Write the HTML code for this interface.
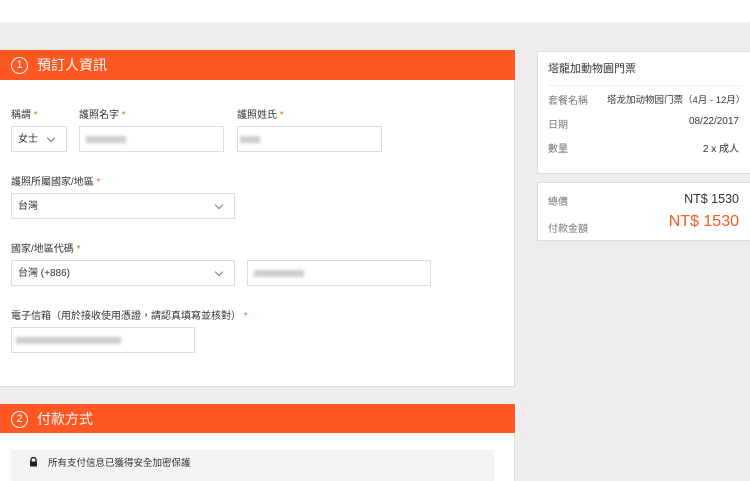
<!DOCTYPE html><html><head><meta charset="utf-8"><style>
*{box-sizing:border-box;margin:0;padding:0}
body{width:750px;height:481px;background:#ededed;font-family:"Liberation Sans","Noto Sans CJK TC",sans-serif;position:relative;overflow:hidden;color:#333}
.a{position:absolute}
.top{left:0;top:0;width:750px;height:22px;background:#fff}
.hd{left:0;width:515px;height:30px;background:#ff5722;color:#fff;font-size:14px;padding-left:11px;display:flex;align-items:center}
.hd span{display:inline-block;width:17px;height:17px;border:1.5px solid #fff;border-radius:50%;font-size:11px;line-height:14px;text-align:center;margin-right:9px}
.lbl{font-size:10px;color:#333}
.lbl b{color:#ff5722;font-weight:normal}
.box{border:1px solid #ddd;background:#fff;font-size:10px;line-height:26px;padding-left:6px}
.chev{position:absolute;right:12px;top:8px;width:6px;height:6px;border-right:1px solid #777;border-bottom:1px solid #777;transform:rotate(45deg)}
.blur{position:absolute;top:9px;height:7px;background:#ccc;filter:blur(1.5px)}
.card{background:#fff;border:1px solid #ddd;left:537px;width:215px}
.r{font-size:10px;color:#777}
.v{font-size:10px;color:#333;white-space:nowrap}
</style></head><body>
<div class="a top"></div>
<div class="a" style="left:0;top:80px;width:515px;height:307px;background:#fff;border-right:1px solid #ddd;border-bottom:1px solid #ddd"></div>
<div class="a hd" style="top:50px"><span>1</span>預訂人資訊</div>
<div class="a lbl" style="left:11px;top:106px">稱謂 <b>*</b></div>
<div class="a lbl" style="left:79px;top:106px">護照名字 <b>*</b></div>
<div class="a lbl" style="left:237px;top:106px">護照姓氏 <b>*</b></div>
<div class="a box" style="left:11px;top:126px;width:56px;height:26px">女士<i class="chev"></i></div>
<div class="a box" style="left:79px;top:126px;width:145px;height:26px"><i class="blur" style="left:6px;width:40px"></i></div>
<div class="a box" style="left:237px;top:126px;width:145px;height:26px"><i class="blur" style="left:2px;width:20px"></i></div>
<div class="a lbl" style="left:11px;top:173px">護照所屬國家/地區 <b>*</b></div>
<div class="a box" style="left:11px;top:193px;width:224px;height:26px">台灣<i class="chev"></i></div>
<div class="a lbl" style="left:11px;top:240px">國家/地區代碼 <b>*</b></div>
<div class="a box" style="left:11px;top:260px;width:224px;height:26px">台灣 (+886)<i class="chev"></i></div>
<div class="a box" style="left:247px;top:260px;width:184px;height:26px"><i class="blur" style="left:6px;width:50px"></i></div>
<div class="a lbl" style="left:11px;top:307px">電子信箱（用於接收使用憑證，請認真填寫並核對） <b>*</b></div>
<div class="a box" style="left:11px;top:327px;width:184px;height:26px"><i class="blur" style="left:4px;width:105px"></i></div>
<div class="a hd" style="top:404px"><span>2</span>付款方式</div>
<div class="a" style="left:0;top:433px;width:515px;height:48px;background:#fff;border-right:1px solid #ddd"></div>
<div class="a" style="left:11px;top:450px;width:483px;height:31px;background:#f3f3f3;font-size:9.5px;line-height:27px;padding-left:37px;color:#333">所有支付信息已獲得安全加密保護</div>
<svg class="a" style="left:29px;top:457px" width="9" height="10" viewBox="0 0 9 10"><path d="M2 5V3a2.5 2.5 0 015 0v2" stroke="#222" stroke-width="1.4" fill="none"/><rect x="1" y="4.5" width="7" height="5" fill="#222"/></svg>
<div class="a card" style="top:51px;height:123px">
<div class="a" style="left:10px;top:8px;font-size:11px;color:#333">塔龍加動物園門票</div>
<div class="a" style="left:10px;top:33px;width:194px;height:1px;background:#eee"></div>
<div class="a r" style="left:10px;top:40px">套餐名稱</div><div class="a v" style="left:69px;top:40px;font-size:9.5px">塔龙加动物园门票（4月 - 12月）</div>
<div class="a r" style="left:10px;top:64px">日期</div><div class="a v" style="right:12px;top:64px">08/22/2017</div>
<div class="a r" style="left:10px;top:88px">數量</div><div class="a v" style="right:12px;top:88px">2 x 成人</div>
</div>
<div class="a card" style="top:182px;height:59px">
<div class="a r" style="left:10px;top:10px">總價</div><div class="a" style="right:12px;top:9px;font-size:12.5px">NT$ 1530</div>
<div class="a r" style="left:10px;top:37px">付款金額</div><div class="a" style="right:12px;top:30px;font-size:16px;color:#ff5722">NT$ 1530</div>
</div>
</body></html>
